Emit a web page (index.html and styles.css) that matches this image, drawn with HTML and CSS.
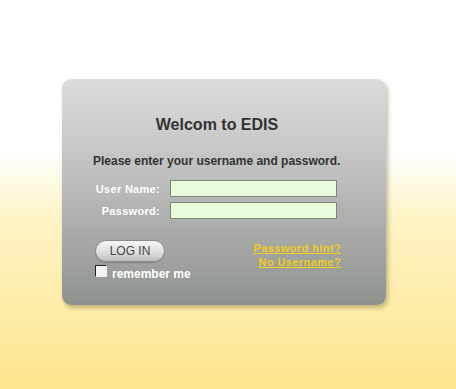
FILE: index.html
```html
<!DOCTYPE html>
<html>
<head>
<meta charset="utf-8">
<link rel="stylesheet" href="styles.css">
</head>
<body>
<div class="page">
  <div class="card">
    <h1 class="title">Welcom to EDIS</h1>
    <p class="intro">Please enter your username and password.</p>
    <div class="fields">
      <label class="label">User Name:</label>
      <input class="input" type="text">
      <label class="label">Password:</label>
      <input class="input" type="password">
    </div>
    <div class="actions">
      <div class="left">
        <button class="login">LOG IN</button>
        <div class="remember">
          <span class="check"></span>
          <span class="remember-text">remember me</span>
        </div>
      </div>
      <div class="links">
        <a class="link" href="#">Password hint?</a>
        <a class="link" href="#">No Username?</a>
      </div>
    </div>
  </div>
</div>
</body>
</html>
```
FILE: styles.css
```css
html, body {
  margin: 0;
  padding: 0;
  height: 100%;
}
body {
  background: linear-gradient(to bottom, #ffffff 0px, #ffffff 150px, #fef3c4 220px, #fde58e 389px);
  font-family: "Liberation Sans", Arial, sans-serif;
}
.page {
  padding: 79px 0 0 62px;
}
.card {
  width: 324px;
  height: 226px;
  box-sizing: border-box;
  border-radius: 9px;
  background: linear-gradient(to bottom, #dcdcdc 0%, #bcbdbc 45%, #8e928e 100%);
  box-shadow: 2px 3px 4px rgba(120, 110, 60, 0.45);
  padding-top: 36px;
}
.title {
  margin: 0;
  padding-right: 14px;
  font-size: 16px;
  line-height: 19px;
  font-weight: bold;
  color: #333333;
  text-align: center;
}
.intro {
  margin: 20px 0 0 31px;
  font-size: 12px;
  line-height: 14px;
  font-weight: bold;
  color: #333333;
}
.fields {
  display: grid;
  grid-template-columns: 98px 167px;
  column-gap: 10px;
  row-gap: 5px;
  margin-top: 12px;
  align-items: center;
}
.label {
  text-align: right;
  font-size: 11px;
  font-weight: bold;
  color: #ffffff;
  letter-spacing: 0.3px;
}
.input {
  width: 167px;
  height: 17px;
  box-sizing: border-box;
  margin: 0;
  padding: 0;
  border: 1px solid #7a8874;
  background: #e8fcdc;
}
.actions {
  display: flex;
  justify-content: space-between;
  margin: 21px 45px 0 33px;
}
.left {
  display: flex;
  flex-direction: column;
}
.login {
  width: 70px;
  height: 22px;
  margin: 0;
  padding: 0;
  border: 1px solid #8a8c8a;
  border-radius: 11px;
  background: linear-gradient(to bottom, #f6f6f6 0%, #dcdcdc 60%, #bdbdbd 100%);
  font-family: "Liberation Sans", Arial, sans-serif;
  font-size: 12px;
  color: #444444;
  box-shadow: 0 1px 1px rgba(0, 0, 0, 0.15);
}
.remember {
  display: flex;
  align-items: flex-start;
  margin-top: 3px;
}
.check {
  width: 10px;
  height: 10px;
  border: 1px solid #222222;
  border-right-color: #eeeeee;
  border-bottom-color: #eeeeee;
  background: #f2f2f2;
}
.remember-text {
  margin-left: 5px;
  margin-top: 2px;
  font-size: 12px;
  line-height: 14px;
  font-weight: bold;
  color: #ffffff;
}
.links {
  display: flex;
  flex-direction: column;
  align-items: flex-end;
  padding-top: 1px;
}
.link {
  font-size: 11px;
  line-height: 14px;
  font-weight: bold;
  color: #f0cc1c;
  text-decoration: underline;
  letter-spacing: 0.4px;
}
```
